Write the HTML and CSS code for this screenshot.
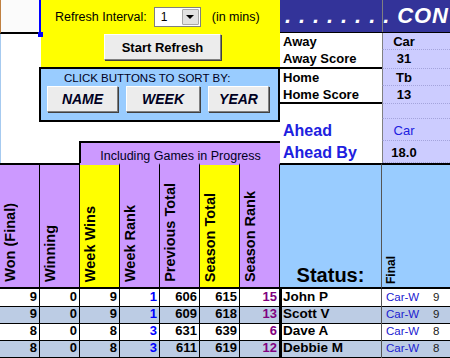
FILE: index.html
```html
<!DOCTYPE html>
<html>
<head>
<meta charset="utf-8">
<link rel="stylesheet" href="styles.css">
</head>
<body>
<div class="sheet">
  <div class="top">
    <div class="left">
      <div class="corner"><span class="handle"></span></div>
      <div class="refresh">
        <div class="interval">
          <span class="lbl">Refresh Interval:</span>
          <div class="select"><span class="sel-val">1</span><span class="sel-btn"><span class="tri"></span></span></div>
          <span class="unit">(in mins)</span>
        </div>
        <button class="btn start">Start Refresh</button>
      </div>
      <div class="sort">
        <div class="sort-title">CLICK BUTTONS TO SORT BY:</div>
        <div class="sort-btns">
          <button class="btn sb name">NAME</button>
          <button class="btn sb week">WEEK</button>
          <button class="btn sb year">YEAR</button>
        </div>
      </div>
      <div class="including">Including Games in Progress</div>
    </div>
    <div class="right">
      <div class="banner">
        <div class="banner-a"><span class="banner-text">. . . . . . . . CON</span></div>
        <div class="banner-b"></div>
      </div>
      <div class="info">
        <div class="k">Away</div><div class="v">Car</div>
        <div class="k sep">Away Score</div><div class="v">31</div>
        <div class="k">Home</div><div class="v">Tb</div>
        <div class="k sep">Home Score</div><div class="v">13</div>
        <div class="k"></div><div class="v"></div>
        <div class="k big">Ahead</div><div class="v big blue">Car</div>
        <div class="k big">Ahead By</div><div class="v big">18.0</div>
      </div>
    </div>
  </div>

  <div class="hdr">
    <div class="h tb"><span class="vt">Won (Final)</span></div>
    <div class="h tb"><span class="vt">Winning</span></div>
    <div class="h y"><span class="vt">Week Wins</span></div>
    <div class="h"><span class="vt">Week Rank</span></div>
    <div class="h"><span class="vt">Previous Total</span></div>
    <div class="h y"><span class="vt">Season Total</span></div>
    <div class="h"><span class="vt">Season Rank</span></div>
    <div class="h tb status">Status:</div>
    <div class="h tb final"><span class="vt">Final</span></div>
  </div>

  <div class="row">
    <div class="c">9</div><div class="c">0</div><div class="c">9</div><div class="c wr">1</div><div class="c">606</div><div class="c">615</div><div class="c sr">15</div>
    <div class="c nm">John P</div><div class="c fin"><span class="pick">Car-W</span><span class="pts">9</span></div>
  </div>
  <div class="row alt">
    <div class="c">9</div><div class="c">0</div><div class="c">9</div><div class="c wr">1</div><div class="c">609</div><div class="c">618</div><div class="c sr">13</div>
    <div class="c nm">Scott V</div><div class="c fin"><span class="pick">Car-W</span><span class="pts">9</span></div>
  </div>
  <div class="row">
    <div class="c">8</div><div class="c">0</div><div class="c">8</div><div class="c wr">3</div><div class="c">631</div><div class="c">639</div><div class="c sr">6</div>
    <div class="c nm">Dave A</div><div class="c fin"><span class="pick">Car-W</span><span class="pts">8</span></div>
  </div>
  <div class="row alt">
    <div class="c">8</div><div class="c">0</div><div class="c">8</div><div class="c wr">3</div><div class="c">611</div><div class="c">619</div><div class="c sr">12</div>
    <div class="c nm">Debbie M</div><div class="c fin"><span class="pick">Car-W</span><span class="pts">8</span></div>
  </div>
  <div class="row">
    <div class="c"></div><div class="c"></div><div class="c"></div><div class="c"></div><div class="c"></div><div class="c"></div><div class="c"></div>
    <div class="c nm"></div><div class="c fin"></div>
  </div>
</div>
</body>
</html>
```

FILE: styles.css
```css
* { box-sizing: border-box; margin: 0; padding: 0; }
html, body { width: 450px; height: 358px; overflow: hidden; background: #fff; }
body { font-family: "Liberation Sans", Arial, sans-serif; color: #000; }
.sheet { width: 450px; }

.top { display: grid; grid-template-columns: 280px 170px; height: 163px; }

.left {
  display: grid;
  grid-template-columns: 41px 39px 200px;
  grid-template-rows: 34px 33px 55px 19px 22px;
  background: linear-gradient(to right, #a6caf0 1px, #fff 1px);
}
.corner {
  grid-column: 1; grid-row: 1;
  background: #fbfbfb;
  border-left: 1px solid #c08040;
  border-right: 2px solid #0000ff;
  border-bottom: 2px solid #000;
  position: relative;
}
.handle {
  position: absolute; right: -4px; bottom: -5px;
  width: 5px; height: 5px; background: #0000ff; z-index: 2;
}

.refresh {
  grid-column: 2 / 4; grid-row: 1 / 3;
  background: #ffff00;
  padding: 7px 0 0 14px;
}
.interval { display: flex; align-items: center; height: 20px; font-size: 12.5px; }
.select {
  margin-left: 7px; width: 47px; height: 20px;
  border: 1px solid #7f7f7f; background: #fff;
  display: flex; align-items: center; justify-content: space-between; padding: 1px;
}
.sel-val { padding-left: 5px; font-size: 12px; }
.sel-btn {
  width: 17px; height: 16px; background: #e2e2e2;
  border: 1px solid #a8a8a8; border-radius: 1px;
  display: flex; align-items: center; justify-content: center;
}
.tri { width: 0; height: 0; border-left: 4px solid transparent; border-right: 4px solid transparent; border-top: 4px solid #000; }
.unit { margin-left: 11px; }

.btn {
  background: #ececec;
  border: 1px solid; border-color: #fff #808080 #808080 #fff;
  box-shadow: 1px 1px 0 #404040;
  color: #000;
  font-family: "Liberation Sans", Arial, sans-serif;
  display: block;
}
.start { margin: 7px 0 0 49px; width: 117px; height: 26px; font-size: 13px; font-weight: bold; }

.sort {
  grid-column: 2 / 4; grid-row: 3;
  margin-left: -2px;
  background: #99ccff;
  border: 2px solid #000;
  padding-top: 3px;
}
.sort-title { font-size: 11.5px; line-height: 13px; padding-left: 23px; color: #000022; white-space: nowrap; }
.sort-btns { display: flex; gap: 8px; padding-left: 6px; margin-top: 1px; }
.sb { height: 26px; font-size: 14px; font-weight: bold; font-style: italic; color: #000022; }
.name { width: 71px; }
.week { width: 74px; }
.year { width: 61px; }

.including {
  grid-column: 3; grid-row: 5;
  margin-left: -1px;
  background: #cc99ff;
  border-top: 2px solid #000; border-left: 2px solid #000;
  font-size: 12.5px; line-height: 14px; padding-top: 6px;
  text-align: center; white-space: nowrap; color: #000022;
}

.right { display: flex; flex-direction: column; }
.banner {
  height: 33px; background: #333399; border-bottom: 1px solid #000;
  display: grid; grid-template-columns: 102px 68px; overflow: hidden;
}
.banner-a {
  white-space: nowrap; color: #fff;
  font-size: 22px; font-weight: bold; font-style: italic;
  letter-spacing: 0.9px; line-height: 32px; padding-left: 5px;
}
.banner-b { border-left: 1px solid #808080; }

.info {
  display: grid;
  grid-template-columns: 102px 68px;
  grid-template-rows: 17px 19px 17px 18px 15px 22px 22px;
}
.k { background: #fff; font-size: 13px; font-weight: bold; line-height: 17px; padding-left: 3px; white-space: nowrap; }
.k.sep { border-bottom: 2px solid #000; }
.v {
  background: #ccccff; border-left: 1px solid #808080;
  border-bottom: 1px dotted #a4a4dc;
  font-size: 13px; font-weight: bold; line-height: 17px;
  text-align: center; padding-right: 25px;
}
.k.big { font-size: 16px; color: #2020e0; line-height: 20px; padding-top: 2px; }
.v.big { line-height: 20px; padding-top: 2px; }
.v.blue { color: #2020e0; font-weight: normal; }

.hdr, .row { display: grid; grid-template-columns: repeat(7, 40px) 102px 68px; }
.hdr { height: 126px; }
.h {
  background: #cc99ff;
  border-top: 2px solid #cc99ff;
  border-right: 1px solid #000;
  border-bottom: 2px solid #000;
  display: flex; align-items: flex-end;
  padding: 0 0 5px 2px;
}
.h.tb { border-top-color: #000; }
.h.y { background: #ffff00; }
.vt {
  writing-mode: vertical-rl; transform: rotate(180deg);
  font-size: 14.5px; font-weight: bold; line-height: 16px; white-space: nowrap;
}
.h.status {
  background: #99ccff; justify-content: center;
  font-size: 20px; font-weight: bold; line-height: 22px;
  padding: 0 0 1px 0; border-right-color: #555;
}
.h.final { background: #99ccff; border-right: none; padding: 0 0 3px 2px; }
.h.final .vt { font-size: 12px; line-height: 14px; }

.row { height: 17px; background: #fff; }
.row.alt { background: #bccce4; }
.c {
  border-right: 1px solid #000; border-bottom: 1px solid #000;
  text-align: right; padding-right: 2px;
  font-size: 13px; font-weight: bold; line-height: 16px; white-space: nowrap;
}
.c.wr { color: #0000ff; }
.c.sr { color: #800080; }
.c.nm { border-left: 2px solid #000; border-right-color: #555; text-align: left; padding-left: 1px; font-size: 13.5px; }
.c.fin { border-right: none; display: flex; padding: 0 0 0 4px; text-align: left; font-weight: normal; font-size: 11.5px; line-height: 17px; }
.pick { width: 47px; color: #2020d0; }
.pts { color: #222; }
```
